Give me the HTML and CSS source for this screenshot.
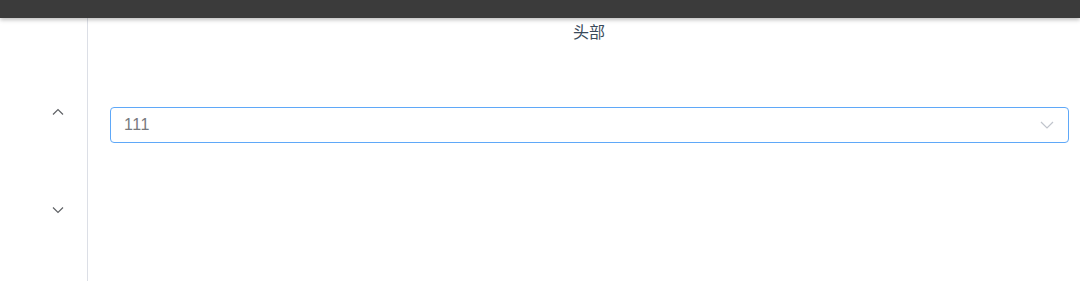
FILE: index.html
```html
<!DOCTYPE html>
<html>
<head>
<meta charset="utf-8">
<link rel="stylesheet" href="styles.css">
</head>
<body>
<div class="topbar"></div>
<div class="layout">
  <aside class="sidebar">
    <div class="arrow arrow-up">
      <svg width="12" height="8" viewBox="0 0 12 8"><path d="M1 6.5 L6 1.5 L11 6.5" fill="none" stroke="#606266" stroke-width="1.2"/></svg>
    </div>
    <div class="arrow arrow-down">
      <svg width="12" height="8" viewBox="0 0 12 8"><path d="M1 1.5 L6 6.5 L11 1.5" fill="none" stroke="#606266" stroke-width="1.2"/></svg>
    </div>
  </aside>
  <main class="main">
    <div class="header">头部</div>
    <div class="select">
      <span class="select-value">111</span>
      <svg class="select-caret" width="14" height="8" viewBox="0 0 14 8"><path d="M1 1 L7 7 L13 1" fill="none" stroke="#c0c4cc" stroke-width="1.2"/></svg>
    </div>
  </main>
</div>
</body>
</html>
```
FILE: styles.css
```css
html, body {
  margin: 0;
  padding: 0;
  height: 100%;
  background: #fff;
  font-family: "Liberation Sans", "Noto Sans CJK SC", sans-serif;
  overflow: hidden;
}
.topbar {
  height: 18px;
  background: #3b3b3b;
  box-shadow: 0 2px 4px rgba(0,0,0,0.25);
  position: relative;
  z-index: 2;
}
.layout {
  display: flex;
  height: calc(100% - 18px);
}
.sidebar {
  width: 87px;
  border-right: 1px solid #dcdfe6;
  display: flex;
  flex-direction: column;
  align-items: center;
  flex-shrink: 0;
}
.arrow {
  width: 12px;
  height: 8px;
  margin-left: 29px;
  display: flex;
}
.arrow-up {
  margin-top: 90px;
}
.arrow-down {
  margin-top: 90px;
}
.main {
  flex: 1;
  display: flex;
  flex-direction: column;
}
.header {
  text-align: center;
  font-family: "Noto Sans CJK SC", sans-serif;
  font-size: 16px;
  line-height: 24px;
  color: #3a4a5a;
  margin-top: 1px;
  padding-left: 10px;
}
.select {
  margin: 64px 11px 0 22px;
  height: 34px;
  border: 1px solid #5fa8f8;
  border-radius: 4px;
  display: flex;
  align-items: center;
  justify-content: space-between;
  padding: 0 14px 0 13px;
}
.select-value {
  font-size: 16px;
  color: #77797e;
  letter-spacing: 0.5px;
}
.select-caret {
  margin-right: 0;
}
```
